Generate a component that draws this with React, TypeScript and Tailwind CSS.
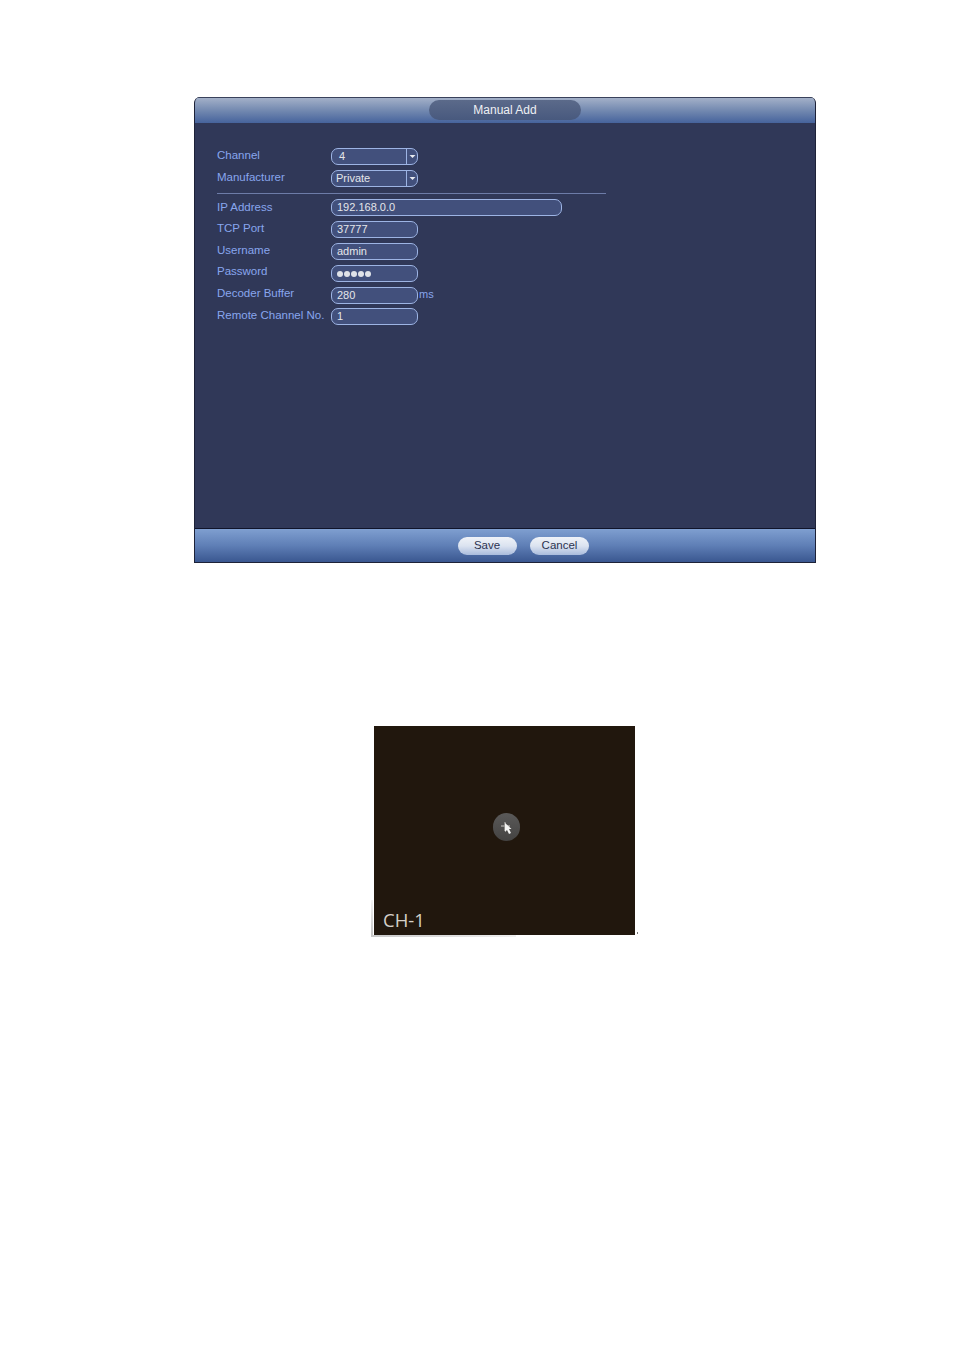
import React from "react";

const font = "font-['Liberation_Sans',Arial,sans-serif]";

function Label({ children, up }: { children: React.ReactNode; up?: "less" | "more" }) {
  const offset = up === "less" ? "-mt-[1px]" : up === "more" ? "-mt-[5px]" : "-mt-[3px]";
  return (
    <div className={`w-[114px] ${offset} text-[11.5px] leading-[14px] text-[#88a6ee] whitespace-nowrap`}>
      {children}
    </div>
  );
}

const inputCls =
  "h-[17px] flex items-center rounded-[7px] border border-[#9db4e4] bg-[#42507c] text-[11px] leading-[14px] text-[#e4e6ea] whitespace-nowrap";

function Select({ value }: { value: string }) {
  return (
    <div className={`${inputCls} w-[87px]`}>
      <span className="flex-1 pl-[4px] pb-[1px]">{value}</span>
      <span className="w-[11px] h-full border-l border-[#9db4e4] flex items-center justify-center">
        <svg width="7" height="5" viewBox="0 0 7 5">
          <path d="M0.5 1 H6.5 L3.5 4 Z" fill="#e8eaf0" />
        </svg>
      </span>
    </div>
  );
}

function Row({
  label,
  children,
  mb = "mb-[5px]",
  up,
}: {
  label: string;
  children: React.ReactNode;
  mb?: string;
  up?: "less" | "more";
}) {
  return (
    <div className={`flex items-center h-[17px] ${mb}`}>
      <Label up={up}>{label}</Label>
      {children}
    </div>
  );
}

function Input({ value, wide }: { value: React.ReactNode; wide?: boolean }) {
  return <div className={`${inputCls} pl-[5px] pb-[1px] ${wide ? "w-[231px]" : "w-[87px]"}`}>{value}</div>;
}

function Dots() {
  return (
    <span className="flex gap-[1px] pt-[1px]">
      <span className="w-[6px] h-[6px] rounded-full bg-[#dfe2e8]" />
      <span className="w-[6px] h-[6px] rounded-full bg-[#dfe2e8]" />
      <span className="w-[6px] h-[6px] rounded-full bg-[#dfe2e8]" />
      <span className="w-[6px] h-[6px] rounded-full bg-[#dfe2e8]" />
      <span className="w-[6px] h-[6px] rounded-full bg-[#dfe2e8]" />
    </span>
  );
}

const btn =
  "w-[59px] h-[18px] rounded-[9px] bg-gradient-to-b from-[#f0f3f8] via-[#dbe3f0] to-[#a9bbdc] text-[11.5px] leading-[17px] text-[#2c3350] text-center";

export default function App() {
  return (
    <div className={`${font} w-[954px] h-[1350px] bg-white overflow-hidden pt-[97px]`}>
      <div className="ml-[194px] w-[622px] h-[466px] flex flex-col bg-[#303858] border-x border-[#1d2238] rounded-t-[6px] overflow-hidden">
        <div className="h-[26px] shrink-0 border-t border-[#39425c] bg-gradient-to-b from-[#a3b0c8] via-[#7389b0] to-[#46639c] flex justify-center pt-[2px]">
          <div className="w-[152px] h-[20px] rounded-[10px] bg-gradient-to-b from-[#5b6a8a] to-[#48597e] text-[12px] leading-[20px] text-[#eef0f4] text-center">
            Manual Add
          </div>
        </div>

        <div className="flex-1 pl-[22px] pt-[25px]">
          <Row label="Channel"><Select value="&nbsp;4" /></Row>
          <Row label="Manufacturer" mb="mb-[6px]"><Select value="Private" /></Row>
          <div className="w-[389px] h-px bg-[#6d7ca8] mb-[5px]" />
          <Row label="IP Address" up="less"><Input value="192.168.0.0" wide /></Row>
          <Row label="TCP Port"><Input value="37777" /></Row>
          <Row label="Username"><Input value="admin" /></Row>
          <Row label="Password" up="more"><Input value={<Dots />} /></Row>
          <Row label="Decoder Buffer" mb="mb-[4px]" up="more">
            <Input value="280" />
            <span className="ml-[1px] pb-[2px] text-[11px] text-[#88a6ee]">ms</span>
          </Row>
          <Row label="Remote Channel No."><Input value="1" /></Row>
        </div>

        <div className="h-[35px] shrink-0 border-t border-[#10142a] border-b border-b-[#1d2238] bg-gradient-to-b from-[#7f9fd0] via-[#5f7fb6] to-[#3a5790] flex justify-center items-center gap-[13px] pl-[37px]">
          <div className={`${btn} pr-[1px]`}>Save</div>
          <div className={btn}>Cancel</div>
        </div>
      </div>

      <div className="relative mt-[163px] ml-[374px] w-[261px] h-[209px] bg-[#21170d] flex flex-col items-center">
        <div className="mt-[87px] ml-[3px] w-[27px] h-[28px] rounded-full bg-gradient-to-b from-[#5a5958] to-[#444342] flex items-center justify-center">
          <svg width="20" height="20" viewBox="0 0 20 20">
            <path d="M5 9 H14 M9 5 V14" stroke="#a09f9c" strokeWidth="1.5" fill="none" />
            <path d="M9 6 L9 15 L11 13 L13 17 L15 16 L13 12 L15.5 12 Z" fill="#f4f4f2" />
          </svg>
        </div>
        <span className="absolute left-[9px] bottom-[3px] font-['Open_Sans',sans-serif] text-[18.5px] leading-[24px] text-[#d4d0c8]">
          CH-1
        </span>
        <div className="absolute -left-[3px] bottom-[-1px] w-[2px] h-[36px] bg-gradient-to-b from-[#f4f4f4] to-[#c4c4c4]" />
        <div className="absolute -left-[3px] bottom-[-2px] w-[145px] h-[2px] bg-gradient-to-r from-[#c8c8c8] to-[#f0f0f0]" />
        <div className="absolute -right-[3px] bottom-[1px] w-[1px] h-[2px] bg-[#777777]" />
      </div>
    </div>
  );
}
